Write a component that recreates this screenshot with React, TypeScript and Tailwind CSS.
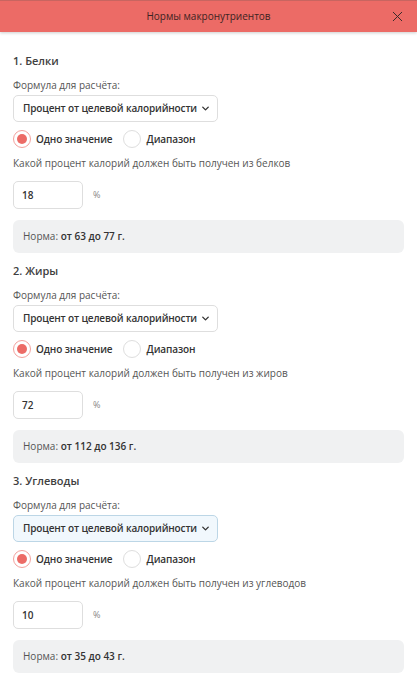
import { X, ChevronDown } from 'lucide-react'

interface Section {
  title: string
  macro: string
  value: string
  from: number
  to: number
  focused?: boolean
}

const sections: Section[] = [
  { title: '1. Белки', macro: 'белков', value: '18', from: 63, to: 77 },
  { title: '2. Жиры', macro: 'жиров', value: '72', from: 112, to: 136 },
  { title: '3. Углеводы', macro: 'углеводов', value: '10', from: 35, to: 43, focused: true },
]

function MacroSection({ s }: { s: Section }) {
  return (
    <div className="flex flex-col">
      <h3 className="text-[11px] leading-[18px] font-semibold text-[#404040]">{s.title}</h3>

      <label className="mt-[7px] text-[10px] leading-[16px] text-[#555]">Формула для расчёта:</label>
      <div
        className={`mt-[2px] w-[205px] h-[27px] rounded-[5px] border flex items-center justify-between pl-[9px] pr-[6px] ${
          s.focused ? 'bg-[#f1f8fd] border-[#bcd6e6]' : 'bg-white border-[#dedede]'
        }`}
      >
        <span className="text-[10px] font-semibold tracking-[-0.15px] text-[#333] whitespace-nowrap">
          Процент от целевой калорийности
        </span>
        <ChevronDown className="w-[11px] h-[11px] text-[#333]" strokeWidth={3} />
      </div>

      {/* Radios */}
      <div className="mt-[8px] flex items-center h-[18px]">
        <div className="flex items-center gap-[5px]">
          <span className="w-[18px] h-[18px] rounded-full border border-[#f3a19d] flex items-center justify-center bg-white">
            <span className="w-[10px] h-[10px] rounded-full bg-[#ec6b66]" />
          </span>
          <span className="text-[10px] font-semibold tracking-[-0.1px] text-[#333]">Одно значение</span>
        </div>
        <div className="flex items-center gap-[6px] ml-[10px]">
          <span className="w-[18px] h-[18px] rounded-full border border-[#dedede] bg-white" />
          <span className="text-[10px] font-semibold tracking-[-0.1px] text-[#333]">Диапазон</span>
        </div>
      </div>

      <p className="mt-[7px] text-[10px] leading-[16px] text-[#555]">
        Какой процент калорий должен быть получен из {s.macro}
      </p>

      <div className="mt-[10px] flex items-center">
        <div className="w-[70px] h-[28px] rounded-[5px] border border-[#dedede] bg-white flex items-center pl-[8px] text-[10px] font-semibold text-[#333]">
          {s.value}
        </div>
        <span className="ml-[10px] text-[9px] text-[#888]">%</span>
      </div>

      <div className="mt-[11px] h-[33px] rounded-[6px] bg-[#f0f1f2] flex items-center pl-[10px] text-[10px] text-[#555]">
        Норма:&nbsp;
        <span className="font-semibold text-[#333]">
          от {s.from} до {s.to} г.
        </span>
      </div>
    </div>
  )
}

export default function App() {
  return (
    <div className="w-[417px] h-[680px] bg-white overflow-hidden" style={{ fontFamily: '"Open Sans", "Noto Sans", sans-serif' }}>
      {/* Header */}
      <div className="relative h-[32px] bg-[#ec6b66] flex items-center justify-center shadow-[0_1px_3px_rgba(0,0,0,0.2)] border-t border-[#c86560]">
        <span className="text-[10px] text-[#3d2322]">Нормы макронутриентов</span>
        <button className="absolute right-[11px] top-[7px]">
          <X className="w-[17px] h-[17px] text-[#3a2a2a]" strokeWidth={1.4} />
        </button>
      </div>

      {/* Body */}
      <div className="px-[13px] pt-[20px] flex flex-col gap-[9px]">
        {sections.map((s) => (
          <MacroSection key={s.title} s={s} />
        ))}
      </div>
    </div>
  )
}
